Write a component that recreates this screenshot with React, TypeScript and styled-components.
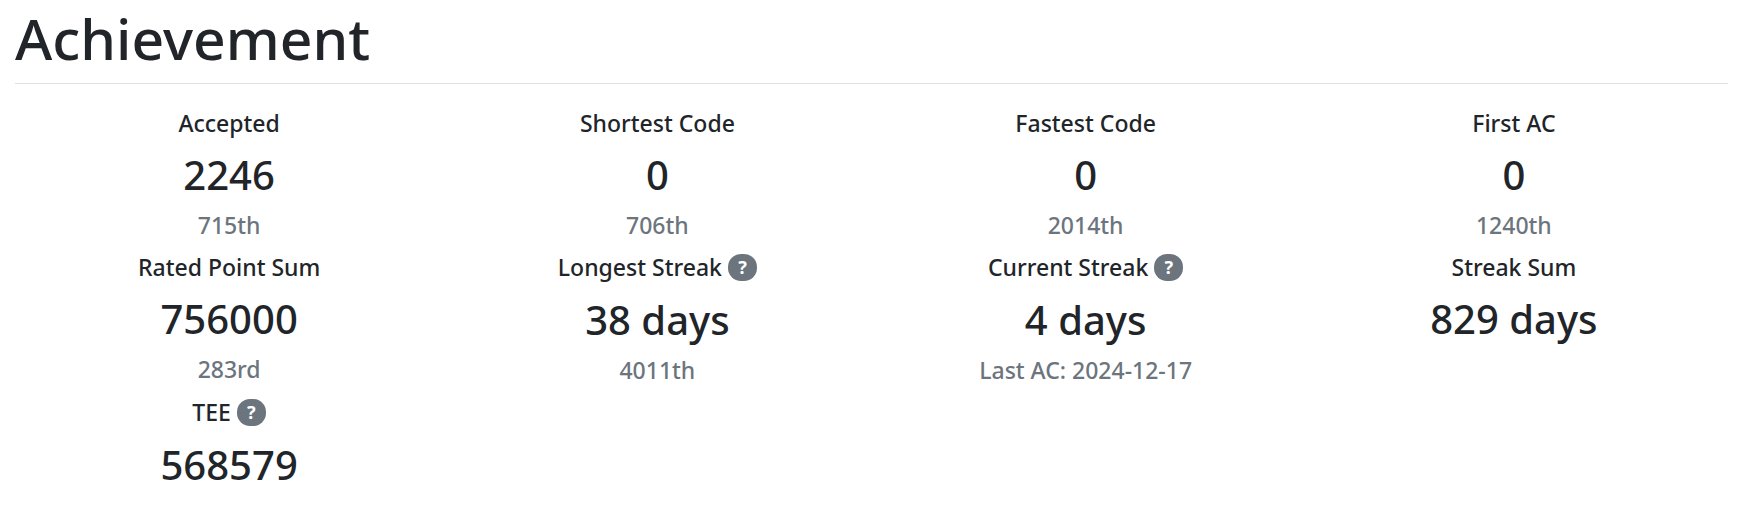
import React from "react";
import styled, { createGlobalStyle } from "styled-components";

const GlobalStyle = createGlobalStyle`
  *, *::before, *::after { box-sizing: border-box; }
  body {
    margin: 0;
    background: #fff;
    color: #212529;
    font-family: "Segoe UI", "Noto Sans", "Liberation Sans", sans-serif;
    font-weight: 500;
    line-height: 1.2;
  }
`;

const Page = styled.main`
  padding: 4px 14px 0 15px;
`;

const Title = styled.h1`
  margin: 0;
  padding-bottom: 11px;
  font-size: 57px;
  line-height: 68px;
  font-weight: 500;
  border-bottom: 1px solid #dee2e6;
`;

const Grid = styled.div`
  display: grid;
  grid-template-columns: repeat(4, 1fr);
  padding-top: 23px;
  text-align: center;
`;

const Stat = styled.section`
  display: flex;
  flex-direction: column;
  align-items: center;
`;

const Label = styled.h2<{ $withHelp?: boolean }>`
  display: flex;
  align-items: center;
  gap: 6px;
  margin: 0;
  padding-bottom: ${({ $withHelp }) => ($withHelp ? "1px" : "0")};
  font-size: 23px;
  line-height: 32px;
  font-weight: 500;
`;

const Value = styled.p`
  margin: 8px 0 6px;
  font-size: 40px;
  line-height: 56px;
`;

const Note = styled.p`
  margin: 0 0 10px;
  font-size: 23px;
  line-height: 32px;
  color: #6c757d;
`;

const Help = styled.button`
  width: 29px;
  height: 27px;
  padding: 0;
  border: 0;
  border-radius: 13px;
  background: #6c757d;
  color: #fff;
  font: 700 18px/27px "Segoe UI", "Noto Sans", sans-serif;
`;

type Item = { label: string; value: string; note?: string; help?: boolean };

const items: Item[] = [
  { label: "Accepted", value: "2246", note: "715th" },
  { label: "Shortest Code", value: "0", note: "706th" },
  { label: "Fastest Code", value: "0", note: "2014th" },
  { label: "First AC", value: "0", note: "1240th" },
  { label: "Rated Point Sum", value: "756000", note: "283rd" },
  { label: "Longest Streak", value: "38 days", note: "4011th", help: true },
  { label: "Current Streak", value: "4 days", note: "Last AC: 2024-12-17", help: true },
  { label: "Streak Sum", value: "829 days" },
  { label: "TEE", value: "568579", help: true },
];

export default function App() {
  return (
    <Page>
      <GlobalStyle />
      <Title>Achievement</Title>
      <Grid>
        {items.map((item) => (
          <Stat key={item.label}>
            <Label $withHelp={item.help}>
              {item.label}
              {item.help && <Help type="button" aria-label={`About ${item.label}`}>?</Help>}
            </Label>
            <Value>{item.value}</Value>
            {item.note && <Note>{item.note}</Note>}
          </Stat>
        ))}
      </Grid>
    </Page>
  );
}
